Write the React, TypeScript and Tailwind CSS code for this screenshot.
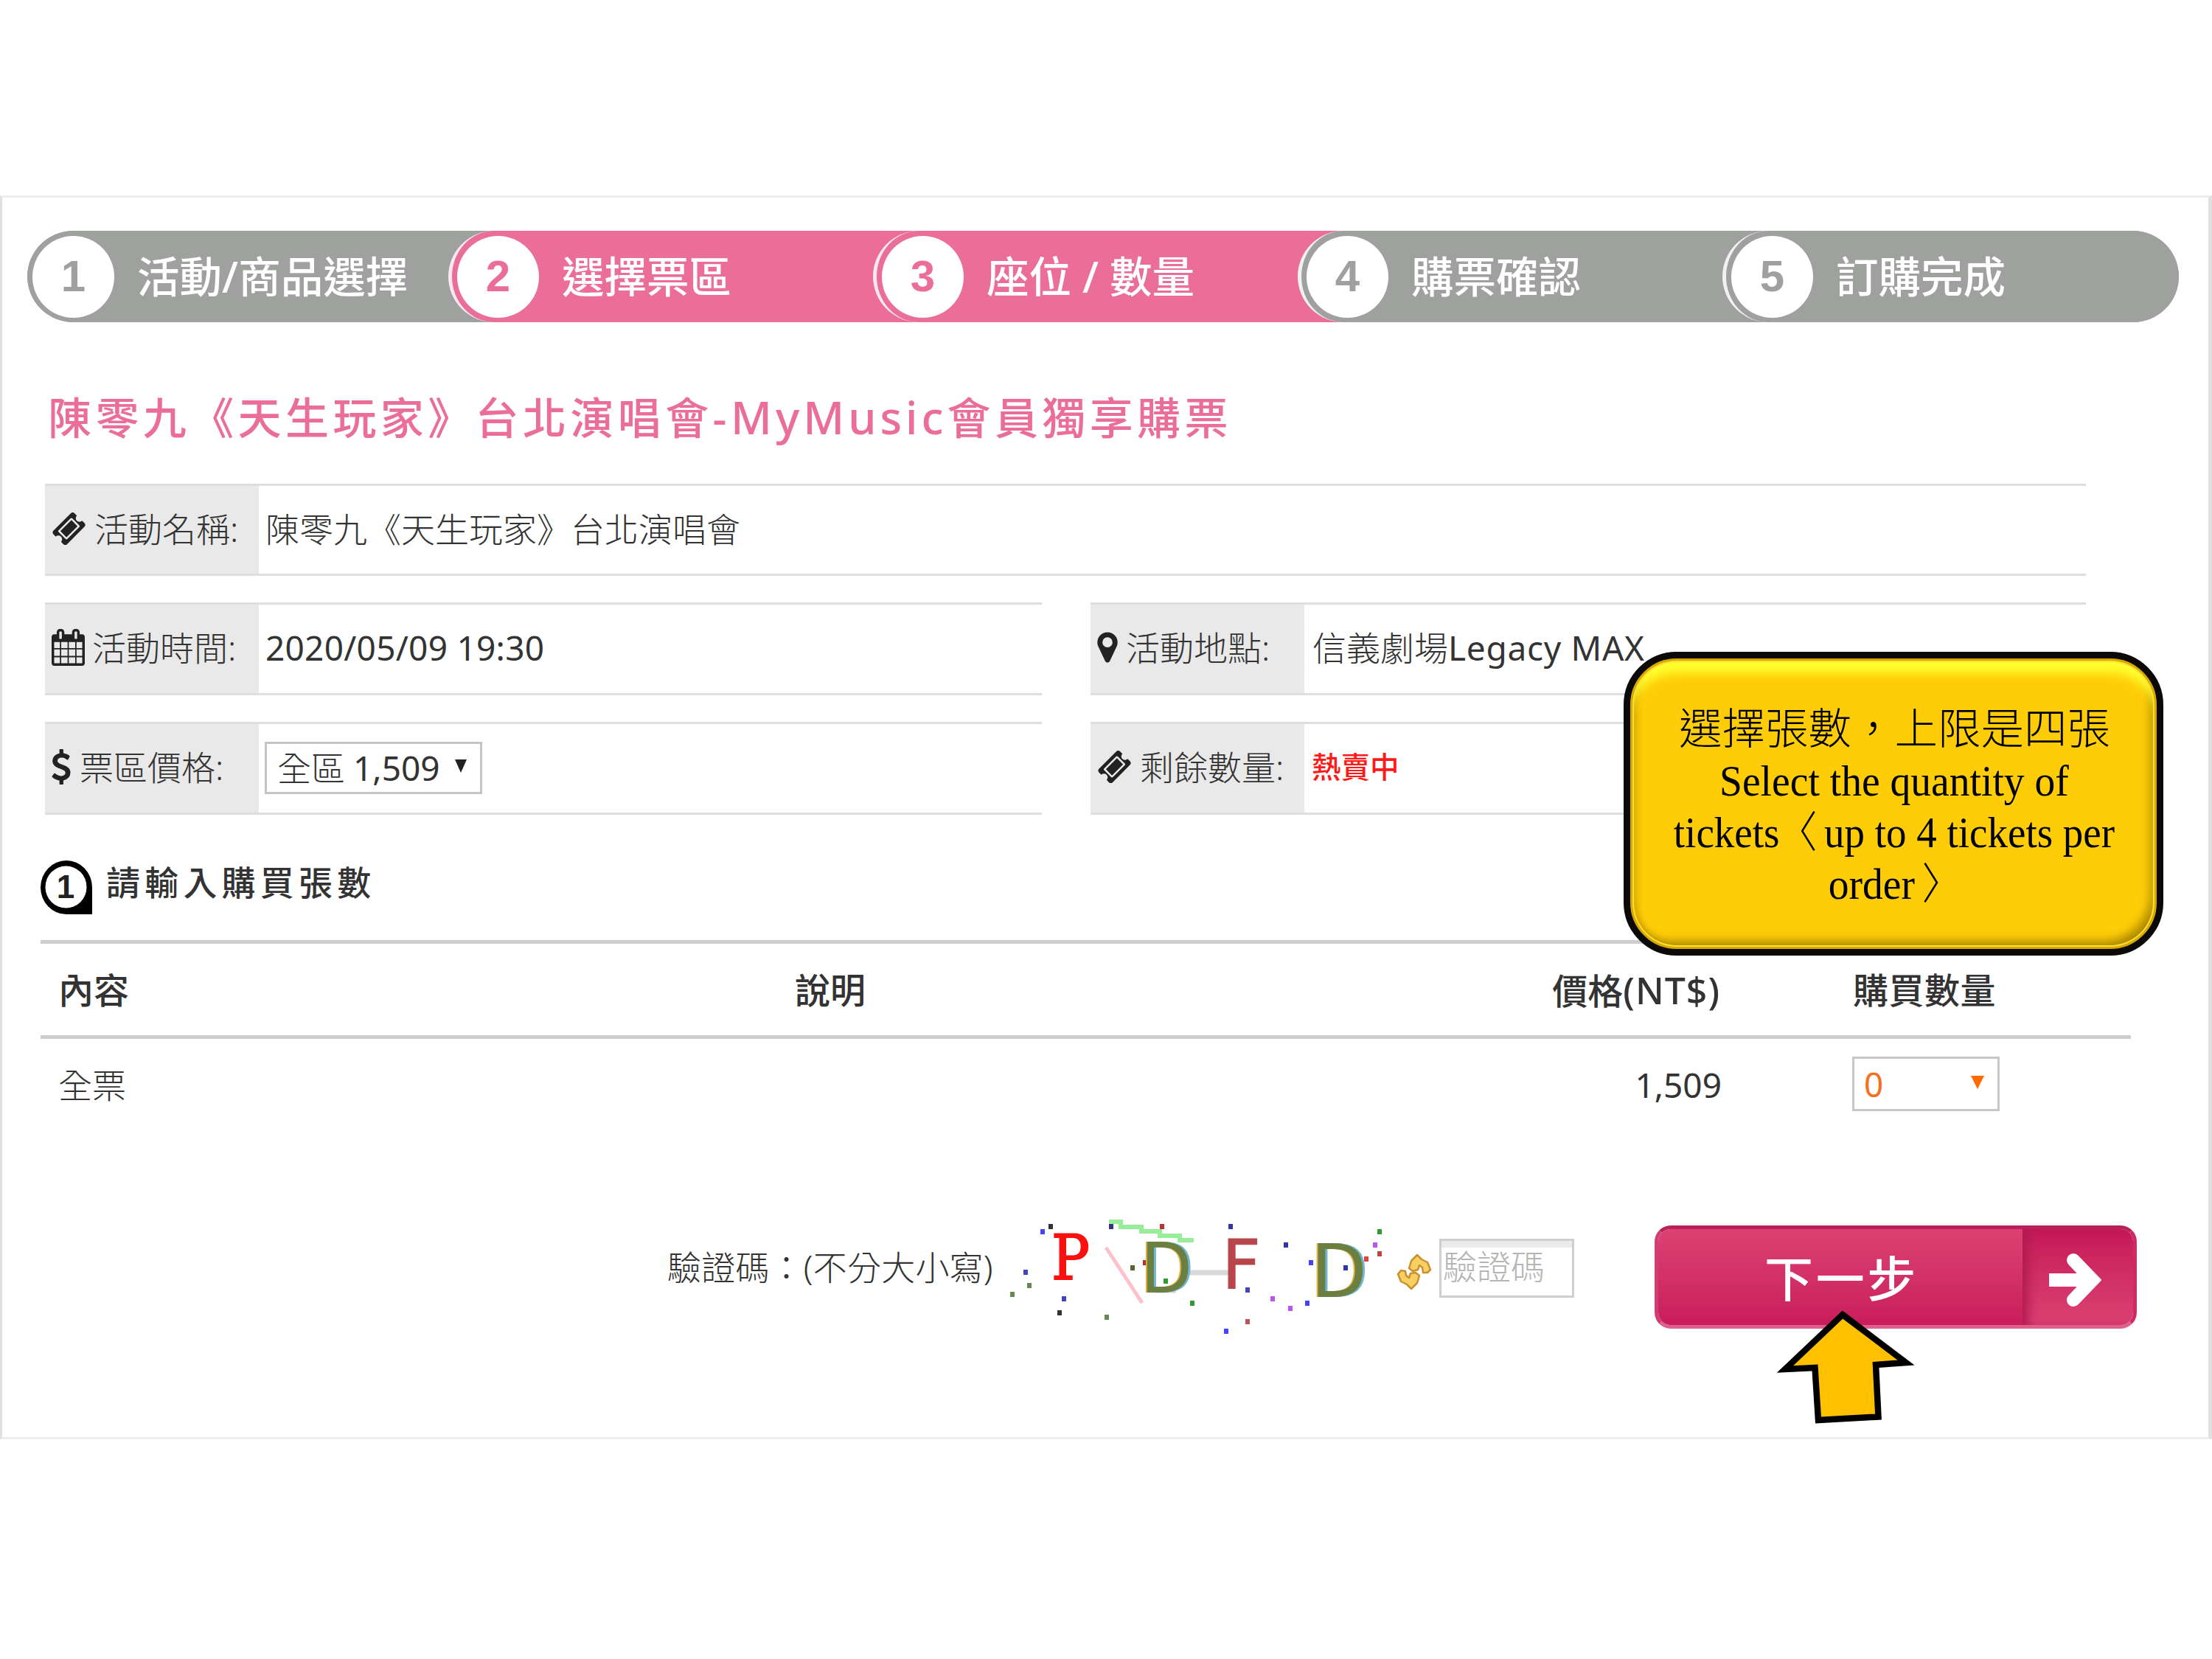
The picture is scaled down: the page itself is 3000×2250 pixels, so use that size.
import type { ReactNode } from "react";

const CJK = "font-['Noto_Sans','Noto_Sans_CJK_TC',sans-serif]";

const steps = [
  { label: "活動/商品選擇", active: false },
  { label: "選擇票區", active: true },
  { label: "座位 / 數量", active: true },
  { label: "購票確認", active: false },
  { label: "訂購完成", active: false },
];

const TICKET =
  "M1024 452l316 316-572 572-316-316 572-572zm-211 979l618-618q19-19 19-45t-19-45l-362-362q-18-18-45-18t-45 18l-618 618q-19 19-19 45t19 45l362 362q18 18 45 18t45-18zm889-637l-907 908q-37 37-90.5 37t-90.5-37l-126-126q56-56 56-136t-56-136-136-56-136 56l-125-126q-37-37-37-90.5t37-90.5l907-906q37-37 90.5-37t90.5 37l125 125q-56 56-56 136t56 136 136 56 136-56l126 125q37 37 37 90.5t-37 90.5z";
const CALENDAR =
  "M192 1664h288v-288h-288v288zm352 0h320v-288h-320v288zm-352-352h288v-320h-288v320zm352 0h320v-320h-320v320zm-352-384h288v-288h-288v288zm736 736h320v-288h-320v288zm-384-736h320v-288h-320v288zm768 736h288v-288h-288v288zm-384-352h320v-320h-320v320zm-352-864v-288q0-13-9.5-22.5t-22.5-9.5h-64q-13 0-22.5 9.5t-9.5 22.5v288q0 13 9.5 22.5t22.5 9.5h64q13 0 22.5-9.5t9.5-22.5zm736 864h288v-320h-288v320zm-384-384h320v-288h-320v288zm384 0h288v-288h-288v288zm32-480v-288q0-13-9.5-22.5t-22.5-9.5h-64q-13 0-22.5 9.5t-9.5 22.5v288q0 13 9.5 22.5t22.5 9.5h64q13 0 22.5-9.5t9.5-22.5zm384-64v1280q0 52-38 90t-90 38h-1408q-52 0-90-38t-38-90v-1280q0-52 38-90t90-38h128v-96q0-66 47-113t113-47h64q66 0 113 47t47 113v96h384v-96q0-66 47-113t113-47h64q66 0 113 47t47 113v96h128q52 0 90 38t38 90z";
const MARKER =
  "M1152 640q0-106-75-181t-181-75-181 75-75 181 75 181 181 75 181-75 75-181zm256 0q0 109-33 179l-364 774q-16 33-47.5 52t-67.5 19-67.5-19-46.5-52l-365-774q-33-70-33-179 0-212 150-362t362-150 362 150 150 362z";
const DOLLAR =
  "M1362 1185q0 153-99.5 263.5t-258.5 136.5v175q0 14-9 23t-23 9h-135q-13 0-22.5-9.5t-9.5-22.5v-175q-66-9-127.5-31t-101.5-44.5-74-48-46.5-37.5-17.5-18q-17-21-2-41l103-135q7-10 23-12 15-2 24 9l2 2q113 99 243 125 37 8 74 8 81 0 142.5-43t61.5-122q0-28-15-53t-33.5-42-58.5-37.5-66-32-80-32.5q-39-16-61.5-25t-61.5-26.5-62.5-31-56.5-35.5-53.5-42.5-43.5-49-35.5-58-21-66.5-8.5-78q0-138 98-242t255-134v-180q0-13 9.5-22.5t22.5-9.5h135q14 0 23 9t9 23v176q57 6 110.5 23t87 33.5 63.5 37.5 39 29 15 14q17 18 5 38l-81 146q-8 15-23 16-14 3-27-7-3-3-14.5-12t-39-26.5-58.5-32-74.5-26-85.5-11.5q-95 0-155 43t-60 111q0 26 8.5 48t29.5 41.5 39.5 33 56 31 60.5 27 70 27.5q53 20 81 31.5t76 35 75.5 42.5 62 50 53 63.5 31.5 76.5 13 94z";

interface InfoRowProps {
  icon: ReactNode;
  label: string;
  className?: string;
  children: ReactNode;
}

function InfoRow({ icon, label, className = "", children }: InfoRowProps) {
  return (
    <div className={`flex border-y-[3px] border-[#dedede] ${className}`}>
      <div className="w-[290px] shrink-0 bg-[#e9e9e9] flex items-center pl-[9px] pb-[4px]">
        {icon}
        <span className="text-[46px] leading-none font-light whitespace-nowrap">{label}</span>
      </div>
      <div className="flex items-center pl-[9px] pb-[4px] text-[46px] leading-none font-light whitespace-nowrap">
        {children}
      </div>
    </div>
  );
}

const dots = [
  [65, 42, "#333"], [54, 49, "#44f"], [147, 42, "#338"], [216, 42, "#b33"],
  [309, 42, "#33a"], [384, 67, "#33a"], [511, 49, "#393"], [505, 67, "#b5e"],
  [511, 79, "#b44"], [493, 86, "#d44"], [418, 91, "#44f"], [465, 98, "#33a"],
  [193, 91, "#a33"], [176, 98, "#563"], [31, 104, "#44b"], [36, 122, "#685"],
  [13, 134, "#685"], [83, 140, "#44b"], [77, 159, "#333"], [141, 165, "#685"],
  [221, 116, "#393"], [257, 146, "#393"], [332, 128, "#44b"], [366, 140, "#b5e"],
  [390, 153, "#b5e"], [413, 146, "#44f"], [332, 171, "#b55"], [303, 184, "#44f"],
] as const;

function Captcha() {
  return (
    <svg className="w-[520px] h-[180px] shrink-0" viewBox="0 8 520 180">
      <path d="M144 35H160V42H188V48H213V54H240V60H259" fill="none" stroke="#98ee98" strokeWidth="6" />
      <path d="M140 70L189 145" stroke="#ffc0cb" strokeWidth="5" />
      <path d="M205 128H235M250 104H306" stroke="#d8d8d8" strokeWidth="7" />
      {dots.map(([x, y, fill], i) => (
        <rect key={i} x={x - 3} y={y - 4} width="6" height="7" fill={fill} />
      ))}
      <text x="66" y="113" fill="#fb1010" stroke="#fb1010" strokeWidth="2" fontSize="84" className="font-['DejaVu_Serif']" textLength="52" lengthAdjust="spacingAndGlyphs">P</text>
      {/* 色邊 */}
      <g fontSize="94" className="font-['DejaVu_Sans']">
        <text x="185" y="131" fill="#e0b040" textLength="70" lengthAdjust="spacingAndGlyphs">D</text>
        <text x="190" y="131" fill="#6fb6d0" textLength="70" lengthAdjust="spacingAndGlyphs">D</text>
        <text x="187" y="131" fill="#6b8040" textLength="70" lengthAdjust="spacingAndGlyphs">D</text>
      </g>
      <text x="297" y="125" fill="#b8454a" stroke="#b8454a" strokeWidth="1" fontSize="92" className="font-['DejaVu_Sans']">F</text>
      <g fontSize="100" className="font-['DejaVu_Sans']">
        <text x="416" y="137" fill="#e0b040" textLength="76" lengthAdjust="spacingAndGlyphs">D</text>
        <text x="421" y="137" fill="#6fb6d0" textLength="76" lengthAdjust="spacingAndGlyphs">D</text>
        <text x="418" y="137" fill="#6b8040" textLength="76" lengthAdjust="spacingAndGlyphs">D</text>
      </g>
    </svg>
  );
}

export default function App() {
  return (
    <div className={`w-[3000px] h-[2250px] bg-white pt-[265px] overflow-hidden text-[#333] ${CJK}`}>
      <div className="relative h-[1687px] border-y-[3px] border-l-[3px] border-r-[5px] border-y-[#eeeeee] border-x-[#e0e0e0] pt-[45px]">
        {/* 步驟 */}
        <div className="ml-[34px] w-[2918px] h-[124px] flex rounded-full overflow-hidden bg-[#9fa19f]">
          {steps.map((s, i) => (
            <div
              key={s.label}
              className={`h-[124px] shrink-0 flex items-center rounded-l-full ${i === 0 ? "w-[639px]" : "w-[644px] -ml-[68px] border-l-[5px] border-white/85"} ${s.active ? "bg-[#eb6e99] text-[#eb6e99]" : "bg-[#9fa19f] text-[#9fa19f]"}`}
            >
              <span className="ml-[7px] size-[111px] rounded-full bg-white flex items-center justify-center text-[60px] leading-none font-bold font-['Liberation_Sans',sans-serif]">
                {i + 1}
              </span>
              <span className="ml-[31px] pt-[2px] text-[57.5px] leading-none font-medium text-white whitespace-pre">{s.label}</span>
            </div>
          ))}
        </div>

        {/* 標題 */}
        <h1 className="ml-[62px] mt-[91px] h-[78px] leading-[76px] text-[59px] tracking-[5.4px] font-medium text-[#eb6e99] whitespace-nowrap">
          陳零九《天生玩家》台北演唱會-<span className="text-[61px] tracking-[5px]">MyMusic</span>會員獨享購票
        </h1>

        {/* 活動資訊 */}
        <div className="ml-[58px] mt-[50px] w-[2768px] grid grid-cols-[1352px_1350px] gap-x-[66px] gap-y-[36px]">
          <InfoRow
            className="col-span-2 h-[125px]"
            icon={<svg className="w-[47px] h-[48px] mr-[11px] fill-[#222]" viewBox="0 0 1792 1792"><path d={TICKET} /></svg>}
            label="活動名稱:"
          >
            陳零九《天生玩家》台北演唱會
          </InfoRow>
          <InfoRow
            className="h-[126px]"
            icon={<svg className="w-[45px] h-[50px] mr-[10px] fill-[#222]" viewBox="64 0 1664 1792" preserveAspectRatio="none"><path d={CALENDAR} /></svg>}
            label="活動時間:"
          >
            <span className="font-normal tracking-[0.25px]">2020/05/09 19:30</span>
          </InfoRow>
          <InfoRow
            className="h-[126px]"
            icon={<svg className="w-[28px] h-[48px] mr-[11px] fill-[#222]" viewBox="384 0 1024 1792"><path d={MARKER} /></svg>}
            label="活動地點:"
          >
            <span className="pl-[2px]">信義劇場<span className="font-normal tracking-[0.7px]">Legacy MAX</span></span>
          </InfoRow>
          <InfoRow
            className="h-[126px]"
            icon={<svg className="w-[26px] h-[48px] mr-[12px] fill-[#222]" viewBox="420 0 950 1792"><path d={DOLLAR} /></svg>}
            label="票區價格:"
          >
            <div className="w-[295px] h-[71px] mt-[2px] -ml-px border-[3px] border-[#c4c4c4] pl-[14px] pr-[18px] flex items-center justify-between">
              <span>全區<span className="font-normal ml-[11px]">1,509</span></span>
              <svg className="w-[16px] h-[18px] -mt-[4px] fill-[#222]" viewBox="0 0 16 18"><path d="M0 0H16L8 18z" /></svg>
            </div>
          </InfoRow>
          <InfoRow
            className="h-[126px]"
            icon={<svg className="w-[47px] h-[48px] mr-[11px] fill-[#222]" viewBox="0 0 1792 1792"><path d={TICKET} /></svg>}
            label="剩餘數量:"
          >
            <span className="pl-px pt-[2px] text-[39.5px] font-medium text-[#ff1a1a]">熱賣中</span>
          </InfoRow>
        </div>

        {/* 購買張數 */}
        <div className="ml-[51px] mt-[62px] flex h-[74px]">
          <svg className="w-[72px] h-[74px]" viewBox="0 0 72 74">
            <ellipse cx="36" cy="36.500" rx="35" ry="36.500" fill="#000" />
            <path d="M36 36H71V73H36z" fill="#000" />
            <ellipse cx="35.500" cy="36" rx="28" ry="28.500" fill="#fff" />
            <text x="35" y="51" textAnchor="middle" fontSize="44" className="font-['Liberation_Sans'] font-bold" fill="#222">1</text>
          </svg>
          <h2 className="ml-[18px] text-[46px] leading-[58px] tracking-[6.2px] font-medium">請輸入購買張數</h2>
        </div>

        <div className="ml-[52px] mt-[34px] w-[2835px]">
          <div className="h-[134px] border-y-[5px] border-[#cecece] flex items-center pt-[2px] text-[48px] leading-none font-medium whitespace-nowrap">
            <span className="w-[1023px] pl-[24px]">內容</span>
            <span className="w-[700px]">說明</span>
            <span className="w-[555px] text-right">價格<span className="text-[50px] tracking-[1px]">(NT$)</span></span>
            <span className="ml-[180px] tracking-[0.5px]">購買數量</span>
          </div>
          <div className="h-[123px] flex items-center text-[46px] leading-none whitespace-nowrap">
            <span className="w-[1723px] pl-[24px] font-light">全票</span>
            <span className="w-[557px] text-right">1,509</span>
            <div className="ml-[177px] w-[200px] h-[74px] -mt-[2px] border-[3px] border-[#c8c8c8] pl-[13px] pr-[18px] flex items-center justify-between text-[#f5701d]">
              0
              <svg className="w-[18px] h-[18px] -mt-[3px] fill-[#ff6a00]" viewBox="0 0 18 18"><path d="M0 0H18L9 18z" /></svg>
            </div>
          </div>
        </div>

        {/* 驗證碼 */}
        <div className="ml-[902px] mt-[98px] flex items-start h-[180px]">
          <span className="mt-[65px] w-[455px] text-[46px] leading-none font-light whitespace-nowrap tracking-[0.2px]">驗證碼：(不分大小寫)</span>
          <Captcha />
          <svg className="mt-[70px] ml-[14px] w-[48px] h-[50px]" viewBox="0 0 48 50" fill="#f8cf62" stroke="#c9922e" strokeWidth="2.5" strokeLinejoin="round">
            <path d="M17 20L20 10L28 2L34 8L42 12L46 22L42 26H36L35 19L31 16L29 22L22 24z" />
            <path d="M31 30L28 40L20 48L14 42L6 38L2 28L6 23L12 24L13 30L17 33L19 27L26 26z" />
          </svg>
          <div className="ml-[10px] mt-[50px] w-[183px] h-[80px] border-[3px] border-[#cfcfcf] shadow-[inset_0_9px_0_#ebebeb] pl-[2px] pt-[11px] text-[46px] leading-none font-light text-[#b5b5b5] whitespace-nowrap">
            驗證碼
          </div>
          <button className="ml-[109px] mt-[32px] w-[654px] h-[140px] shrink-0 flex rounded-[22px] overflow-hidden border-[5px] border-t-[#b9205a] border-l-[#cf3d72] border-r-[#cf2a66] border-b-[#e0608c] text-white">
            <span className="w-[494px] h-full bg-linear-to-b from-[#dc4173] to-[#c91c5b] flex items-center justify-center pl-[3px] pt-[2px] text-[66px] leading-none tracking-[3.600px] font-medium">
              下一步
            </span>
            <span className="flex-1 h-full bg-linear-to-b from-[#c51757] to-[#dc4173] shadow-[inset_12px_0_14px_-4px_#b01c50] flex items-center justify-center pr-[11px] pt-[8px]">
              <svg className="w-[74px] h-[76px]" viewBox="0 0 74 76" fill="none" stroke="#fff" strokeWidth="18">
                <path d="M3 38H56" />
                <path d="M36 11L62 38L36 65" strokeLinecap="round" />
              </svg>
            </span>
          </button>
        </div>

        {/* 說明框 */}
        <div className="absolute left-[2199px] top-[616px] w-[732px] h-[412px] rounded-[72px] border-[9px] border-[#0c0a08] bg-[#fecd08] text-black text-center text-[58.500px] leading-[70px] pt-[62px] shadow-[inset_0_0_0_3px_#d9a800,inset_0_0_0_5px_#ffe030,inset_0_22px_14px_-2px_#ffff30,inset_-10px_-12px_14px_-2px_#a98500,inset_8px_0_10px_#c89800] font-['Liberation_Serif','Noto_Sans_CJK_TC',serif]">
          <p className="pl-[3px] font-light whitespace-nowrap">選擇張數，上限是四張</p>
          <p className="pl-[2px] whitespace-nowrap scale-x-[0.95]">Select the quantity of</p>
          <p className="pl-[2px] whitespace-nowrap scale-x-[0.94]">
            tickets<span className="font-light -ml-[4px] mr-[10px]">〈</span>up to 4 tickets per
          </p>
          <p className="pl-[6px] whitespace-nowrap scale-x-[0.95]">
            order<span className="font-light ml-[10px]">〉</span>
          </p>
        </div>

        <svg className="absolute left-[2397px] top-[1502px] w-[210px] h-[170px]" viewBox="2400 1770 210 170">
          <path d="M2499 1783L2585 1848L2544 1851L2547.500 1921.500L2466 1926L2461.500 1855L2421 1857z" fill="#ffc000" stroke="#000" strokeWidth="8.500" strokeMiterlimit="10" />
        </svg>
      </div>
    </div>
  );
}
